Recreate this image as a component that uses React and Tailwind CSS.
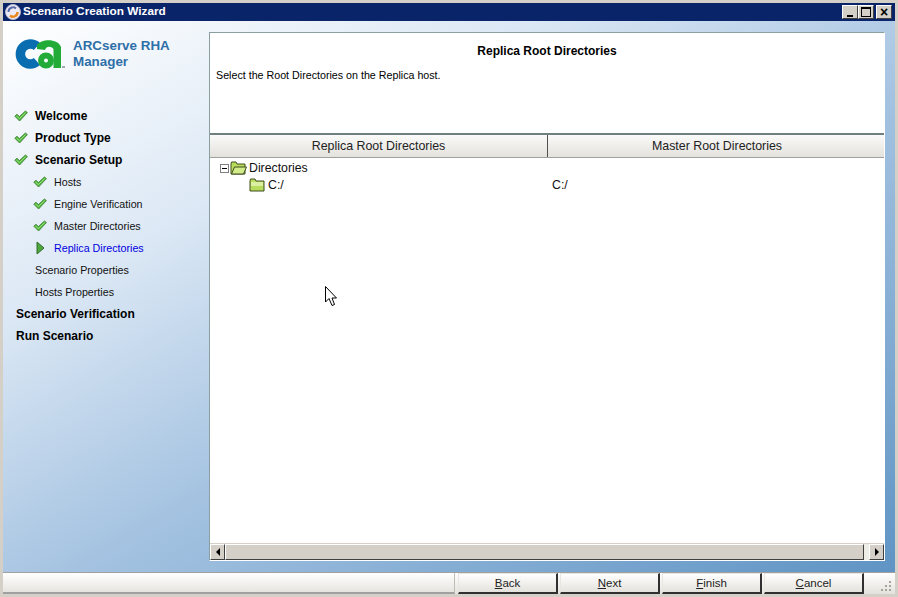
import React from "react";

const font = "font-['Liberation_Sans',Arial,sans-serif]";

const Check = ({ className = "" }) => (
  <svg width="14" height="12" viewBox="0 0 14 12" className={className}>
    <path d="M0.8 6.2 L3 4.2 L5.4 6.6 L11.4 1 L13.4 2.6 L5.6 11 Z" fill="#4fb83a" stroke="#3c7a34" strokeWidth="0.8" strokeLinejoin="round" />
    <path d="M2.4 6 L5.4 8.6 L11.6 2.6" fill="none" stroke="#a6e58e" strokeWidth="0.9" />
  </svg>
);

const Play = () => (
  <svg width="9" height="14" viewBox="0 0 9 14">
    <path d="M1 1 L8 7 L1 13 Z" fill="#4ea83c" stroke="#2f6b2c" strokeWidth="1" />
  </svg>
);

const Folder = ({ open }) => (
  <svg width="17" height="14" viewBox="0 0 17 14">
    <path d="M1 3 L1.5 1 L6 1 L7 3 L15 3 L15 13 L1 13 Z" fill="#b8dc5c" stroke="#3f4d1e" strokeWidth="1" />
    {open ? (
      <path d="M1.5 13 L4.5 6 L16.5 6 L13.5 13 Z" fill="#d2ec8c" stroke="#3f4d1e" strokeWidth="1" />
    ) : (
      <rect x="2" y="4" width="12" height="4" fill="#dcf0a4" />
    )}
  </svg>
);

const CaLogo = () => (
  <svg width="53" height="34" viewBox="0 0 53 34">
    <path d="M22 9.5 A10 10 0 1 0 22 24.5" fill="none" stroke="#0a6db0" strokeWidth="9.5" />
    <circle cx="31" cy="23.5" r="5" fill="none" stroke="#22ab36" strokeWidth="6" />
    <path d="M22 8 C26 1.5 43 1 46 10 L46 31 L38.5 31 L38.5 12 C36 8.5 31 9 30 13 L22 12 Z" fill="#22ab36" />
    <path d="M47 30 L50 30" stroke="#7c8ea0" strokeWidth="1.5" />
  </svg>
);

const Cursor = () => (
  <svg width="14" height="22" viewBox="0 0 14 22" className="absolute left-[321px] top-[282px]">
    <path d="M1.5 1.5 L1.5 17 L5 13.5 L8 20.5 L10.5 19.5 L8 13 L12.5 13 Z" fill="#fff" stroke="#000" strokeWidth="1" />
  </svg>
);

const WinButton = ({ children, className = "" }) => (
  <div className={`flex h-[14px] w-[16px] items-center justify-center border-t border-l border-white border-r border-b border-r-[#404040] border-b-[#404040] bg-[#d4d0c8] ${className}`}>
    {children}
  </div>
);

const Step = ({ label, state, bold, sub }) => {
  let textClass = "text-[10.7px] text-[#111]";
  if (bold) textClass = "text-[12px] font-bold text-black";
  if (state === "current") textClass = "text-[10.7px] text-[#0000e0]";

  return (
    <div className={`flex h-[22px] items-center ${sub ? "pl-[30px]" : state ? "pl-[11px]" : "pl-[32px]"}`}>
      {state === "done" && <Check className="mr-[7px] shrink-0" />}
      {state === "current" && <span className="mr-[9px] ml-[3px] flex shrink-0"><Play /></span>}
      <span className={`${textClass} whitespace-nowrap`}>{label}</span>
    </div>
  );
};

const Btn = ({ first, rest }) => (
  <div className="flex h-[21px] w-[100px] items-center justify-center border-t border-l border-[#e8e6e0] border-r-2 border-b-2 border-r-[#303030] border-b-[#303030] bg-gradient-to-b from-white to-[#e4e2dc] pt-[2px] text-[11.5px] text-[#222]">
    <span className="underline">{first}</span>
    <span>{rest}</span>
  </div>
);

export default function App() {
  return (
    <div className={`relative flex h-[597px] w-[898px] flex-col overflow-hidden border-[3px] border-[#d4d0c8] ${font}`}>
      {/* title bar */}
      <div className="flex h-[18px] shrink-0 items-center bg-[#0a246a] pl-[2px] pr-[3px]">
        <svg width="16" height="16" viewBox="0 0 16 16" className="mr-[2px] shrink-0">
          <circle cx="8" cy="8" r="7.5" fill="#eceaf4" stroke="#b8b8d0" strokeWidth="1" />
          <path d="M3.5 8 A4.5 4.5 0 0 1 11 4.5" fill="none" stroke="#5a6ca8" strokeWidth="2" />
          <path d="M12.5 8 A4.5 4.5 0 0 1 5 11.5" fill="none" stroke="#e8891c" strokeWidth="2.4" />
        </svg>
        <span className="text-[11.8px] font-bold text-white">Scenario Creation Wizard</span>
        <div className="ml-auto flex items-center">
          <WinButton>
            <div className="mt-[7px] h-[2px] w-[6px] bg-black" />
          </WinButton>
          <WinButton>
            <div className="h-[10px] w-[10px] border border-t-2 border-black" />
          </WinButton>
          <WinButton className="ml-[2px]">
            <span className="text-[14px] font-bold leading-none text-black">×</span>
          </WinButton>
        </div>
      </div>

      {/* body */}
      <div className="flex min-h-0 flex-1 bg-[linear-gradient(150deg,#ffffff_0%,#dce8f5_28%,#a5c3e1_55%,#5f94c4_100%)]">
        <div className="flex w-[205px] shrink-0 flex-col">
          <div className="flex h-[82px] shrink-0 pl-[12px] pt-[16px]">
            <CaLogo />
            <div className="ml-[5px] pt-[1px] text-[13.4px] font-bold leading-[16px] text-[#2e6fa8]">
              <div>ARCserve RHA</div>
              <div>Manager</div>
            </div>
          </div>
          <div className="pt-[2px]">
            <Step label="Welcome" state="done" bold />
            <Step label="Product Type" state="done" bold />
            <Step label="Scenario Setup" state="done" bold />
            <Step label="Hosts" state="done" sub />
            <Step label="Engine Verification" state="done" sub />
            <Step label="Master Directories" state="done" sub />
            <Step label="Replica Directories" state="current" sub />
            <Step label="Scenario Properties" />
            <Step label="Hosts Properties" />
            <div className="flex h-[22px] items-center pl-[13px] text-[12px] font-bold text-black">Scenario Verification</div>
            <div className="flex h-[22px] items-center pl-[13px] text-[12px] font-bold text-black">Run Scenario</div>
          </div>
        </div>

        {/* right panel */}
        <div className="mt-[11px] mb-[11px] ml-[1px] flex w-[676px] flex-col border border-[#8aa0a0] border-r-white border-b-white bg-white">
          <div className="h-[102px] shrink-0 border-b-2 border-[#6f7f7f] text-[10.7px] text-black">
            <div className="pt-[9px] text-center text-[12px] font-bold">Replica Root Directories</div>
            <div className="pl-[6px] pt-[7px]">Select the Root Directories on the Replica host.</div>
          </div>
          <div className="flex h-[23px] shrink-0 border-b border-[#a0a0a0] bg-gradient-to-b from-[#fafafa] to-[#e4e2dc] text-[12.4px] text-[#222]">
            <div className="flex w-[338px] items-center justify-center border-r border-[#505050] pt-[1px]">Replica Root Directories</div>
            <div className="flex flex-1 items-center justify-center pl-[2px] pt-[1px]">Master Root Directories</div>
          </div>
          <div className="relative min-h-0 flex-1 text-[12.3px] text-[#111]">
            <div className="flex h-[18px] items-center pl-[10px] pt-[2px]">
              <div className="flex h-[9px] w-[9px] items-center justify-center border border-[#808080]">
                <div className="h-px w-[5px] bg-black" />
              </div>
              <span className="ml-px flex"><Folder open /></span>
              <span className="ml-[2px]">Directories</span>
            </div>
            <div className="flex h-[18px] items-center pl-[39px]">
              <Folder />
              <span className="ml-[2px] w-[284px]">C:/</span>
              <span>C:/</span>
            </div>
          </div>
          {/* scrollbar */}
          <div className="flex h-[17px] shrink-0 items-center bg-[#d4d0c8]">
            <div className="flex h-[16px] w-[15px] items-center justify-center border-t border-l border-white border-r border-b border-r-[#404040] border-b-[#404040] bg-[#d4d0c8]">
              <div className="h-0 w-0 border-y-[4px] border-r-[4px] border-y-transparent border-r-black" />
            </div>
            <div className="h-[16px] flex-1 border-t border-l border-white border-r border-b border-r-[#404040] border-b-[#404040] bg-[#d4d0c8]" />
            <div className="h-[16px] w-[5px] bg-[#eeece6]" />
            <div className="flex h-[16px] w-[15px] items-center justify-center border-t border-l border-white border-r border-b border-r-[#404040] border-b-[#404040] bg-[#d4d0c8]">
              <div className="h-0 w-0 border-y-[4px] border-l-[4px] border-y-transparent border-l-black" />
            </div>
          </div>
        </div>
      </div>

      {/* footer */}
      <div className="flex h-[22px] shrink-0 items-end border-t border-[#a0a0a0] bg-gradient-to-b from-white to-[#e4e2dc]">
        <div className="h-full w-[452px] border-r border-[#c0bdb5] border-b-2 border-b-[#a0a0a0]" />
        <div className="ml-[3px] flex gap-[2px]">
          <Btn first="B" rest="ack" />
          <Btn first="N" rest="ext" />
          <Btn first="F" rest="inish" />
          <Btn first="C" rest="ancel" />
        </div>
        <div className="ml-auto flex items-end pb-[3px] pr-[3px]">
          <svg width="11" height="11" viewBox="0 0 11 11">
            <g fill="#a8a49c">
              <rect x="8" y="1" width="2" height="2" />
              <rect x="4" y="5" width="2" height="2" />
              <rect x="8" y="5" width="2" height="2" />
              <rect x="0" y="9" width="2" height="2" />
              <rect x="4" y="9" width="2" height="2" />
              <rect x="8" y="9" width="2" height="2" />
            </g>
          </svg>
        </div>
      </div>

      <Cursor />
    </div>
  );
}
